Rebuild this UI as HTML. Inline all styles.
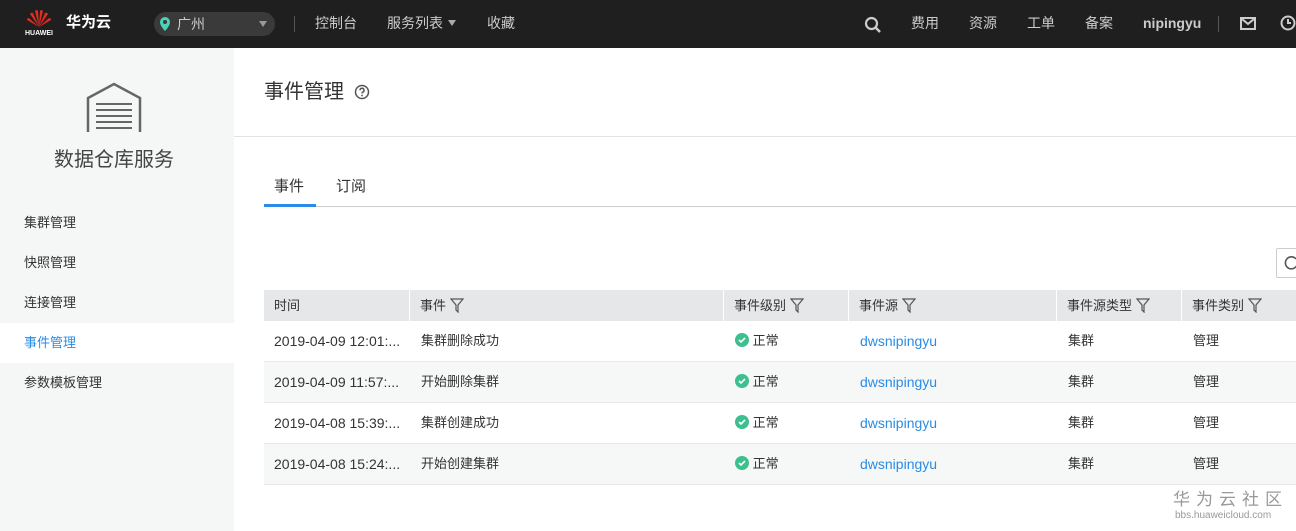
<!DOCTYPE html>
<html><head><meta charset="utf-8"><style>
*{margin:0;padding:0;box-sizing:border-box}
body{width:1296px;height:531px;overflow:hidden;background:#fff;font-family:"Liberation Sans","Noto Sans CJK SC",sans-serif;color:#333;position:relative}
.top{position:absolute;left:0;top:0;width:1296px;height:48px;background:#1f1f1f;color:#ccc;font-size:14px}
.top span{position:absolute;top:0;line-height:46px;white-space:nowrap}
.side{position:absolute;left:0;top:48px;width:234px;height:483px;background:#f5f6f6}
.side .it{position:absolute;left:24px;font-size:13px;color:#333;line-height:20px}
.abs{position:absolute;white-space:nowrap}
.th{position:absolute;top:290px;height:31px;background:#e6e7e8;font-size:13px;line-height:31px;padding-left:10px;color:#333;border-right:1px solid #fff;white-space:nowrap}
.row{position:absolute;left:264px;width:1032px;height:41px;border-bottom:1px solid #e8e8e8;font-size:13px}
.row span{position:absolute;top:0;line-height:40px;white-space:nowrap}
.row .l{font-size:14px}
.f{display:inline-block;vertical-align:-3px;margin-left:4px}
</style></head><body>
<div class="top">
<svg class="abs" style="left:26px;top:9px" width="26" height="18" viewBox="0 0 26 18"><g fill="#e02b20"><path d="M13 18 L9 2 Q11 0 12 2Z"/><path d="M13 18 L17 2 Q15 0 14 2Z"/><path d="M13 18 L4 5 Q5 3 7 4Z"/><path d="M13 18 L22 5 Q21 3 19 4Z"/><path d="M13 18 L1 11 Q1 9 3 9Z"/><path d="M13 18 L25 11 Q25 9 23 9Z"/></g></svg>
<div class="abs" style="left:25px;top:30px;font-size:7px;color:#fff;font-weight:bold">HUAWEI</div>
<span style="left:66px;color:#fff;font-weight:bold;font-size:15px">华为云</span>
<div class="abs" style="left:154px;top:12px;width:121px;height:24px;border-radius:12px;background:#3a3a3a"></div>
<svg class="abs" style="left:160px;top:17px" width="10" height="14" viewBox="0 0 10 14"><path d="M5 0a5 5 0 0 1 5 5c0 4-5 9-5 9S0 9 0 5a5 5 0 0 1 5-5z" fill="#4fd1b6"/><circle cx="5" cy="5" r="2" fill="#3a3a3a"/></svg>
<span style="left:177px;line-height:48px">广州</span>
<div class="abs" style="left:259px;top:21px;border:4px solid transparent;border-top:6px solid #999"></div>
<div class="abs" style="left:294px;top:16px;width:1px;height:16px;background:#555"></div>
<span style="left:315px">控制台</span>
<span style="left:387px">服务列表</span>
<div class="abs" style="left:448px;top:20px;border:4px solid transparent;border-top:6px solid #aaa"></div>
<span style="left:487px">收藏</span>
<svg class="abs" style="left:864px;top:16px" width="18" height="18" viewBox="0 0 18 18"><circle cx="7.5" cy="7.5" r="5.5" stroke="#ccc" stroke-width="2.2" fill="none"/><path d="M11.5 11.5L16 16" stroke="#ccc" stroke-width="2.5"/></svg>
<span style="left:911px">费用</span><span style="left:969px">资源</span><span style="left:1027px">工单</span><span style="left:1085px">备案</span>
<span style="left:1143px;font-weight:bold">nipingyu</span>
<div class="abs" style="left:1218px;top:16px;width:1px;height:16px;background:#555"></div>
<svg class="abs" style="left:1240px;top:17px" width="16" height="13" viewBox="0 0 16 13"><rect x="1" y="1" width="14" height="11" fill="none" stroke="#ccc" stroke-width="2"/><path d="M2 2l6 5 6-5" stroke="#ccc" stroke-width="2" fill="none"/></svg>
<svg class="abs" style="left:1280px;top:15px" width="16" height="16" viewBox="0 0 16 16"><circle cx="8" cy="8" r="6.5" fill="none" stroke="#ccc" stroke-width="2"/><path d="M8 4v4h3" stroke="#ccc" stroke-width="2" fill="none"/></svg>
</div>
<div class="side">
<svg class="abs" style="left:86px;top:34px" width="56" height="50" viewBox="0 0 56 50"><path d="M2 50V16L28 2 54 16V50" fill="none" stroke="#666" stroke-width="2.5"/><g stroke="#666" stroke-width="2"><path d="M10 22h36M10 28h36M10 34h36M10 40h36M10 46h36"/></g></svg>
<div class="abs" style="left:54px;top:95px;font-size:20px;color:#444">数据仓库服务</div>
<div class="it" style="top:165px">集群管理</div>
<div class="it" style="top:205px">快照管理</div>
<div class="it" style="top:245px">连接管理</div>
<div class="abs" style="left:0;top:275px;width:234px;height:40px;background:#fff"></div>
<div class="it" style="top:285px;color:#2a8ce6">事件管理</div>
<div class="it" style="top:325px">参数模板管理</div>
</div>
<div class="abs" style="left:264px;top:78px;font-size:20px;color:#333;line-height:28px">事件管理</div>
<svg class="abs" style="left:354px;top:84px" width="16" height="16" viewBox="0 0 16 16"><circle cx="8" cy="8" r="6.5" fill="none" stroke="#555" stroke-width="1.5"/><path d="M6 6.3a2 2 0 1 1 2.6 1.9c-.5.2-.6.6-.6 1.3" fill="none" stroke="#555" stroke-width="1.5"/><circle cx="8" cy="11.5" r=".9" fill="#555"/></svg>
<div class="abs" style="left:234px;top:136px;width:1062px;height:1px;background:#e3e3e3"></div>
<div class="abs" style="left:274px;top:176px;font-size:15px;color:#333;line-height:22px">事件</div>
<div class="abs" style="left:336px;top:176px;font-size:15px;color:#333;line-height:22px">订阅</div>
<div class="abs" style="left:264px;top:206px;width:1032px;height:1px;background:#ccc"></div>
<div class="abs" style="left:264px;top:204px;width:52px;height:3px;background:#2a8ce6"></div>
<div class="abs" style="left:1276px;top:248px;width:30px;height:30px;border:1px solid #ccc;border-radius:2px"></div>
<svg class="abs" style="left:1284px;top:255px" width="14" height="16"><path d="M12 4A6 6 0 1 0 13 10" fill="none" stroke="#555" stroke-width="1.6"/></svg>
<div class="th" style="left:264px;width:146px">时间</div>
<div class="th" style="left:410px;width:314px">事件<svg class="f" width="14" height="15" viewBox="0 0 14 15"><path d="M1 1h12L8 7v7L6 12V7z" fill="none" stroke="#555" stroke-width="1.2"/></svg></div>
<div class="th" style="left:724px;width:125px">事件级别<svg class="f" width="14" height="15" viewBox="0 0 14 15"><path d="M1 1h12L8 7v7L6 12V7z" fill="none" stroke="#555" stroke-width="1.2"/></svg></div>
<div class="th" style="left:849px;width:208px">事件源<svg class="f" width="14" height="15" viewBox="0 0 14 15"><path d="M1 1h12L8 7v7L6 12V7z" fill="none" stroke="#555" stroke-width="1.2"/></svg></div>
<div class="th" style="left:1057px;width:125px">事件源类型<svg class="f" width="14" height="15" viewBox="0 0 14 15"><path d="M1 1h12L8 7v7L6 12V7z" fill="none" stroke="#555" stroke-width="1.2"/></svg></div>
<div class="th" style="left:1182px;width:114px;border:none">事件类别<svg class="f" width="14" height="15" viewBox="0 0 14 15"><path d="M1 1h12L8 7v7L6 12V7z" fill="none" stroke="#555" stroke-width="1.2"/></svg></div>

<div class="row" style="top:321px;background:#fff"><span class="l" style="left:10px">2019-04-09 12:01:...</span><span style="left:157px">集群删除成功</span><span style="left:471px"><svg width="14" height="14" style="vertical-align:-2px"><circle cx="7" cy="7" r="7" fill="#3dbf8f"/><path d="M4 7l2 2 4-4" stroke="#fff" stroke-width="1.6" fill="none"/></svg> 正常</span><span class="l" style="left:596px;color:#2a8ce6">dwsnipingyu</span><span style="left:804px">集群</span><span style="left:929px">管理</span></div>
<div class="row" style="top:362px;background:#f6f7f7"><span class="l" style="left:10px">2019-04-09 11:57:...</span><span style="left:157px">开始删除集群</span><span style="left:471px"><svg width="14" height="14" style="vertical-align:-2px"><circle cx="7" cy="7" r="7" fill="#3dbf8f"/><path d="M4 7l2 2 4-4" stroke="#fff" stroke-width="1.6" fill="none"/></svg> 正常</span><span class="l" style="left:596px;color:#2a8ce6">dwsnipingyu</span><span style="left:804px">集群</span><span style="left:929px">管理</span></div>
<div class="row" style="top:403px;background:#fff"><span class="l" style="left:10px">2019-04-08 15:39:...</span><span style="left:157px">集群创建成功</span><span style="left:471px"><svg width="14" height="14" style="vertical-align:-2px"><circle cx="7" cy="7" r="7" fill="#3dbf8f"/><path d="M4 7l2 2 4-4" stroke="#fff" stroke-width="1.6" fill="none"/></svg> 正常</span><span class="l" style="left:596px;color:#2a8ce6">dwsnipingyu</span><span style="left:804px">集群</span><span style="left:929px">管理</span></div>
<div class="row" style="top:444px;background:#f6f7f7"><span class="l" style="left:10px">2019-04-08 15:24:...</span><span style="left:157px">开始创建集群</span><span style="left:471px"><svg width="14" height="14" style="vertical-align:-2px"><circle cx="7" cy="7" r="7" fill="#3dbf8f"/><path d="M4 7l2 2 4-4" stroke="#fff" stroke-width="1.6" fill="none"/></svg> 正常</span><span class="l" style="left:596px;color:#2a8ce6">dwsnipingyu</span><span style="left:804px">集群</span><span style="left:929px">管理</span></div>

<div class="abs" style="left:1173px;top:489px;font-size:17px;color:#999;letter-spacing:6px;line-height:22px">华为云社区</div>
<div class="abs" style="left:1175px;top:510px;font-size:10px;color:#999;line-height:12px">bbs.huaweicloud.com</div>
</body></html>
